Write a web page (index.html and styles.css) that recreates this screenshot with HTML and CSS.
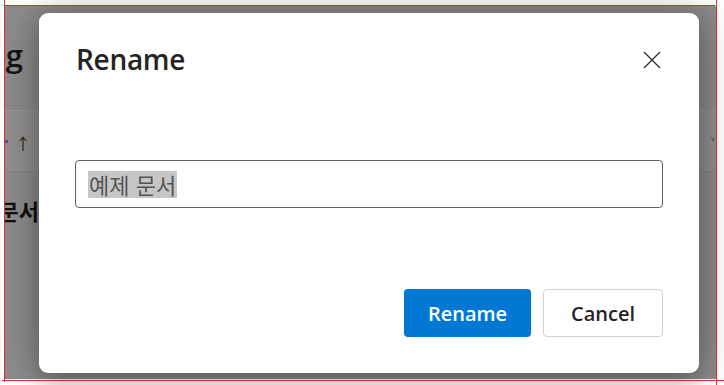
FILE: index.html
```html
<!DOCTYPE html>
<html lang="ko">
<head>
<meta charset="utf-8">
<link rel="stylesheet" href="styles.css">
</head>
<body>
<div class="stage">
  <div class="backdrop">
    <div class="page">
      <div class="page-title"><div class="clipbox title-clip"><span>Renaming</span></div></div>
      <div class="page-head">
        <span class="dot"></span>
        <span class="arrow">↑</span>
        <span class="chev">˅</span>
      </div>
      <div class="page-row"><div class="clipbox row-clip"><span>예제 문서</span></div></div>
    </div>
  </div>

  <div class="dialog" role="dialog">
    <div class="dialog-head">
      <h1 class="dialog-title">Rename</h1>
      <button class="close" aria-label="Close">
        <svg width="18" height="18" viewBox="0 0 18 18"><path d="M1 1 L17 17 M17 1 L1 17" stroke="#333" stroke-width="1.4" fill="none"/></svg>
      </button>
    </div>
    <div class="field"><span class="sel">예제 문서</span></div>
    <div class="actions">
      <button class="btn primary">Rename</button>
      <button class="btn secondary">Cancel</button>
    </div>
  </div>

  <div class="guide g-top"></div>
  <div class="guide g-left"></div>
  <div class="guide g-right"></div>
  <div class="guide g-bottom"></div>
</div>
</body>
</html>
```
FILE: styles.css
```css
html, body { margin: 0; padding: 0; background: #fff; }
body { font-family: "Open Sans", "Noto Sans", "Noto Sans CJK KR", sans-serif; }
.stage { position: relative; width: 724px; height: 385px; overflow: hidden; }

.backdrop {
  margin: 6px 8px 0 5px;
  width: 711px; height: 373px;
  background: #8b8b8b;
  overflow: hidden;
}
.page { display: flex; flex-direction: column; }
.clipbox { display: flex; justify-content: flex-end; overflow: hidden; white-space: nowrap; }
.page-title {
  height: 104px; border-bottom: 1px solid #979797;
  display: flex; align-items: flex-start;
}
.title-clip {
  width: 18px; margin-top: 28px;
  font-size: 31px; font-weight: 600; color: #161616;
}
.page-head {
  height: 60px; background: #8f8f8f; border-bottom: 1px solid #848484;
  display: flex; align-items: center; font-size: 16px; color: #3a2a14;
}
.dot { width: 3px; height: 3px; border-radius: 50%; background: #2a4a9a; margin-left: 0; }
.arrow { margin-left: 7px; margin-top: 4px; }
.chev { margin-left: auto; margin-right: 1px; margin-top: 4px; font-size: 14px; color: #222; }
.page-row { height: 70px; display: flex; align-items: center; }
.row-clip {
  width: 34px; margin-top: 6px;
  font-family: "Noto Sans CJK KR", sans-serif; font-size: 22px; font-weight: 700; color: #111;
}

.dialog {
  position: absolute; left: 39px; top: 13px;
  width: 660px; height: 360px; box-sizing: border-box;
  background: #fff; border-radius: 9px;
  padding: 0 36px 36px 36px;
  display: flex; flex-direction: column;
  box-shadow: 0 0 40px rgba(0,0,0,0.28), 0 10px 24px rgba(0,0,0,0.18);
}
.dialog-head { display: flex; align-items: center; justify-content: space-between; height: 92px; }
.dialog-title { margin: 0 0 0 1px; font-size: 28px; font-weight: 600; color: #242424; letter-spacing: -0.3px; }
.close { border: 0; background: none; padding: 0; margin-right: 2px; margin-top: 2px; display: flex; }

.field {
  margin-top: 55px; height: 48px; box-sizing: border-box;
  border: 1px solid #616161; border-radius: 4px;
  display: flex; align-items: center; padding-left: 12px;
  font-family: "Noto Sans CJK KR", sans-serif; font-size: 22px; color: #555;
}
.sel { background: #c6c6c6; line-height: 27px; padding: 0 1px; }

.actions { margin-top: auto; display: flex; justify-content: flex-end; gap: 12px; }
.btn {
  height: 48px; border-radius: 4px; font-family: "Open Sans", sans-serif;
  font-size: 20px; font-weight: 600; padding: 0; cursor: pointer;
}
.primary { width: 127px; background: #0078d4; color: #fff; border: 0; }
.secondary { width: 120px; background: #fff; color: #242424; border: 1px solid #d1d1d1; }

.guide { position: absolute; background: #e8262b; }
.g-top { left: 5px; top: 5px; width: 710px; height: 1px; }
.g-left { left: 4px; top: 0; width: 1px; height: 382px; }
.g-right { left: 716px; top: 0; width: 1px; height: 385px; }
.g-bottom { left: 2px; top: 380px; width: 722px; height: 1px; }
```
